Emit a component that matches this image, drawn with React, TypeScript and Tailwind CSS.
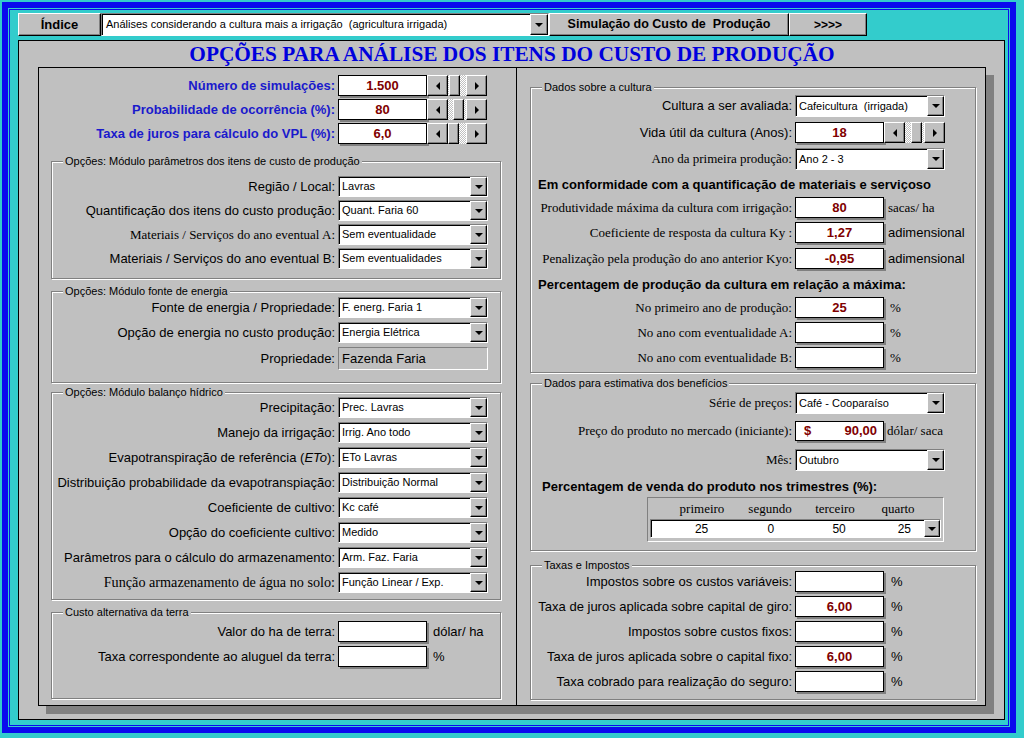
import React from "react";

const sans = "font-['Liberation_Sans',Arial,sans-serif]";
const serif = "font-['Liberation_Serif','Times_New_Roman',serif]";
const raised =
  "border border-t-white border-l-white border-r-black border-b-black shadow-[inset_-1px_-1px_0_#808080] bg-[#c0c0c0]";
const sunken =
  "border border-t-[#808080] border-l-[#808080] border-r-white border-b-white shadow-[inset_1px_1px_0_#000]";
const shadowed = "border border-black shadow-[2px_2px_0_#808080] bg-white";

function DownTri() {
  return <div className="w-0 h-0 border-x-[4px] border-x-transparent border-t-[4px] border-t-black" />;
}

function DropBtn({ w = "w-[17px]" }: { w?: string }) {
  return (
    <div className={`${w} h-full shrink-0 flex items-center justify-center ${raised}`}>
      <DownTri />
    </div>
  );
}

function Combo({ value, w = "w-[150px]", h = "h-[21px]" }: { value: string; w?: string; h?: string }) {
  return (
    <div className={`${w} ${h} shrink-0 flex bg-white ${sunken}`}>
      <div className={`flex-1 min-w-0 flex items-center pl-[3px] text-[11px] ${sans} text-black whitespace-pre overflow-hidden`}>
        {value}
      </div>
      <DropBtn />
    </div>
  );
}

function Arrow({ dir }: { dir: "l" | "r" }) {
  return (
    <div className={`w-[21px] h-full shrink-0 flex items-center justify-center ${raised}`}>
      {dir === "l" ? (
        <div className="w-0 h-0 border-y-[4px] border-y-transparent border-r-[4px] border-r-black" />
      ) : (
        <div className="w-0 h-0 border-y-[4px] border-y-transparent border-l-[4px] border-l-black" />
      )}
    </div>
  );
}

function Spinner({ thumb, track = "w-[18px]" }: { thumb: string; track?: string }) {
  return (
    <div className="flex h-full shrink-0">
      <Arrow dir="l" />
      <div
        className={`${track} h-full flex [background-image:repeating-conic-gradient(#ffffff_0%_25%,#c0c0c0_0%_50%)] [background-size:2px_2px]`}
      >
        <div className={`${thumb} w-[11px] h-full ${raised}`} />
      </div>
      <Arrow dir="r" />
    </div>
  );
}

function Val({ v, w = "w-[89px]", h = "h-[21px]" }: { v?: string; w?: string; h?: string }) {
  return (
    <div className={`${w} ${h} shrink-0 ${shadowed} flex items-center justify-center text-[13px] font-bold text-[#800000] ${sans}`}>
      {v}
    </div>
  );
}

function Label({
  w,
  children,
  f = "sans",
  size = "text-[13px]",
}: {
  w: string;
  children: React.ReactNode;
  f?: "sans" | "serif";
  size?: string;
}) {
  return (
    <div className={`${w} shrink-0 text-right pr-[3px] ${size} whitespace-nowrap text-black ${f === "serif" ? serif : sans}`}>
      {children}
    </div>
  );
}

function Group({ title, className, children }: { title: string; className: string; children: React.ReactNode }) {
  return (
    <div className={`border border-[#808080] shadow-[1px_1px_0_#fff,inset_1px_1px_0_#fff] flex flex-col ${className}`}>
      <div className={`-mt-[7px] ml-[11px] w-fit px-[2px] bg-[#c0c0c0] h-[13px] leading-[13px] text-[11px] text-black ${sans}`}>
        {title}
      </div>
      {children}
    </div>
  );
}

const LW = "w-[286px]";
const RW = "w-[264px]";

function LRow({
  label,
  value,
  f,
  size,
}: {
  label: React.ReactNode;
  value: string;
  f?: "sans" | "serif";
  size?: string;
}) {
  return (
    <div className="flex items-center h-[21px]">
      <Label w={LW} f={f} size={size}>
        {label}
      </Label>
      <Combo value={value} />
    </div>
  );
}

function RRow({
  label,
  f,
  children,
  h = "h-[21px]",
  className = "",
}: {
  label: React.ReactNode;
  f?: "sans" | "serif";
  children: React.ReactNode;
  h?: string;
  className?: string;
}) {
  return (
    <div className={`flex items-center ${h} ${className}`}>
      <Label w={RW} f={f}>
        {label}
      </Label>
      {children}
    </div>
  );
}

function Unit({ children, f = "sans", ml = "ml-[5px]" }: { children: React.ReactNode; f?: "sans" | "serif"; ml?: string }) {
  return <div className={`${ml} text-[13px] text-black whitespace-nowrap ${f === "serif" ? serif : sans}`}>{children}</div>;
}

function SpinRow({ label, v, thumb }: { label: string; v: string; thumb: string }) {
  return (
    <div className="flex items-center h-[21px]">
      <div className={`w-[299px] shrink-0 text-right pr-[3px] text-[13px] font-bold text-[#1a1acc] whitespace-nowrap ${sans}`}>
        {label}
      </div>
      <Val v={v} />
      <Spinner thumb={thumb} />
    </div>
  );
}

export default function App() {
  return (
    <div className="w-[1024px] h-[738px] bg-[#33cccc] pt-[2px] pl-[2px] pr-[8px] pb-[5px] overflow-hidden">
      <div className="w-full h-full border-[6px] border-[#0a0aee]">
        <div className="w-full h-full p-[1px]">
          <div className="w-full h-full border border-[#0a0aee] bg-[#33cccc] pt-[3px] pl-[8px] flex flex-col">
            {/* top bar */}
            <div className="flex h-[23px]">
              <div className={`w-[83px] h-full flex items-center justify-center text-[13px] font-bold text-black ${sans} ${raised}`}>
                Índice
              </div>
              <div className={`w-[448px] h-full flex bg-white ${sunken}`}>
                <div className={`flex-1 flex items-center pl-[4px] text-[11px] text-black whitespace-pre ${sans}`}>
                  Análises considerando a cultura mais a irrigação  (agricultura irrigada)
                </div>
                <DropBtn w="w-[18px]" />
              </div>
              <div
                className={`w-[240px] h-full flex items-center justify-center text-[12.5px] font-bold text-black whitespace-pre ${sans} ${raised}`}
              >
                Simulação do Custo de  Produção
              </div>
              <div className={`w-[78px] h-full flex items-center justify-center text-[12px] font-bold text-black ${sans} ${raised}`}>
                &gt;&gt;&gt;&gt;
              </div>
            </div>

            {/* form */}
            <div className="mt-[4px] w-[987px] h-[680px] border border-black bg-[#c0c0c0] pl-[19px] flex flex-col">
              <div className="w-[948px] h-[26px] flex items-center justify-center">
                <div className={`text-[21.3px] leading-[26px] font-bold text-[#0000dd] whitespace-nowrap ${serif}`}>
                  OPÇÕES PARA ANÁLISE DOS ITENS DO CUSTO DE PRODUÇÃO
                </div>
              </div>

              <div className="w-[948px] h-[639px] border border-black bg-[#c0c0c0] shadow-[8px_8px_0_#808080] flex">
                {/* left column */}
                <div className="w-[478px] h-full border-r border-black flex flex-col pt-[7px]">
                  <div className="flex flex-col gap-[3px]">
                    <SpinRow label="Número de simulações:" v="1.500" thumb="ml-[1px]" />
                    <SpinRow label="Probabilidade de ocorrência (%):" v="80" thumb="ml-[5px]" />
                    <SpinRow label="Taxa de juros para cálculo do VPL (%):" v="6,0" thumb="ml-0" />
                  </div>

                  <div className="pl-[12px] flex flex-col">
                    <Group title="Opções: Módulo parâmetros dos itens de custo de produção" className="mt-[17px] w-[450px] h-[118px]">
                      <div className="mt-[8px] flex flex-col gap-[3px]">
                        <LRow label="Região / Local:" value="Lavras" />
                        <LRow label="Quantificação dos itens do custo produção:" value="Quant. Faria 60" />
                        <LRow label="Materiais / Serviços do ano eventual A:" value="Sem eventualidade" f="serif" />
                        <LRow label="Materiais / Serviços do ano eventual B:" value="Sem eventualidades" />
                      </div>
                    </Group>

                    <Group title="Opções: Módulo fonte de energia" className="mt-[12px] w-[450px] h-[92px]">
                      <div className="-mt-[1px] flex flex-col gap-[4px]">
                        <LRow label="Fonte de energia / Propriedade:" value="F. energ. Faria 1" />
                        <LRow label="Opção de energia no custo produção:" value="Energia Elétrica" />
                        <div className="flex items-center h-[23px]">
                          <Label w={LW}>Propriedade:</Label>
                          <div
                            className={`w-[150px] h-full border border-t-[#808080] border-l-[#808080] border-r-white border-b-white flex items-center pl-[3px] text-[13px] text-black ${sans}`}
                          >
                            Fazenda Faria
                          </div>
                        </div>
                      </div>
                    </Group>

                    <Group title="Opções: Módulo balanço hídrico" className="mt-[9px] w-[450px] h-[208px]">
                      <div className="-mt-[2px] flex flex-col gap-[4px]">
                        <LRow label="Precipitação:" value="Prec. Lavras" />
                        <LRow label="Manejo da irrigação:" value="Irrig. Ano todo" />
                        <LRow
                          label={
                            <>
                              Evapotranspiração de referência (<i>ETo</i>):
                            </>
                          }
                          value="ETo Lavras"
                        />
                        <LRow label="Distribuição probabilidade da evapotranspiação:" value="Distribuição Normal" />
                        <LRow label="Coeficiente de cultivo:" value="Kc café" />
                        <LRow label="Opção do coeficiente cultivo:" value="Medido" />
                        <LRow label="Parâmetros para o cálculo do armazenamento:" value="Arm. Faz. Faria" />
                        <LRow
                          label="Função armazenamento de água no solo:"
                          value="Função Linear / Exp."
                          f="serif"
                          size="text-[14.2px]"
                        />
                      </div>
                    </Group>

                    <Group title="Custo alternativa da terra" className="mt-[12px] w-[450px] h-[87px]">
                      <div className="mt-[2px] flex flex-col gap-[4px]">
                        <div className="flex items-center h-[21px]">
                          <Label w={LW}>Valor do ha de terra:</Label>
                          <Val />
                          <Unit ml="ml-[6px]">dólar/ ha</Unit>
                        </div>
                        <div className="flex items-center h-[21px]">
                          <Label w={LW}>Taxa correspondente ao aluguel da terra:</Label>
                          <Val />
                          <Unit ml="ml-[6px]">%</Unit>
                        </div>
                      </div>
                    </Group>
                  </div>
                </div>

                {/* right column */}
                <div className="flex-1 h-full pl-[13px] pt-[19px] flex flex-col">
                  <Group title="Dados sobre a cultura" className="w-[446px] h-[286px]">
                    <RRow label="Cultura a ser avaliada:" h="h-[22px]" className="mt-[1px]">
                      <Combo value="Cafeicultura  (irrigada)" h="h-[22px]" />
                    </RRow>
                    <RRow label="Vida útil da cultura (Anos):" className="mt-[5px]">
                      <Val v="18" />
                      <Spinner thumb="ml-[6px]" track="w-[19px]" />
                    </RRow>
                    <RRow label="Ano da primeira produção:" f="serif" h="h-[22px]" className="mt-[5px]">
                      <Combo value="Ano 2 - 3" h="h-[22px]" />
                    </RRow>
                    <div className={`mt-[7px] h-[16px] leading-[16px] pl-[7px] text-[13px] font-bold text-black whitespace-nowrap ${sans}`}>
                      Em conformidade com a quantificação de materiais e serviçoso
                    </div>
                    <RRow label="Produtividade máxima da cultura com irrigação:" f="serif" className="mt-[4px]">
                      <Val v="80" />
                      <Unit f="serif" ml="ml-[4px]">
                        sacas/ ha
                      </Unit>
                    </RRow>
                    <RRow label="Coeficiente de resposta da cultura  Ky :" f="serif" className="mt-[4px]">
                      <Val v="1,27" />
                      <Unit ml="ml-[4px]">adimensional</Unit>
                    </RRow>
                    <RRow label="Penalização pela produção do ano anterior Kyo:" f="serif" className="mt-[5px]">
                      <Val v="-0,95" />
                      <Unit ml="ml-[4px]">adimensional</Unit>
                    </RRow>
                    <div className={`mt-[8px] h-[16px] leading-[16px] pl-[7px] text-[13px] font-bold text-black whitespace-nowrap ${sans}`}>
                      Percentagem de produção da cultura em relação a máxima:
                    </div>
                    <RRow label="No primeiro ano de produção:" f="serif" className="mt-[4px]">
                      <Val v="25" />
                      <Unit f="serif" ml="ml-[6px]">
                        %
                      </Unit>
                    </RRow>
                    <RRow label="No ano com eventualidade A:" f="serif" className="mt-[4px]">
                      <Val />
                      <Unit f="serif" ml="ml-[6px]">
                        %
                      </Unit>
                    </RRow>
                    <RRow label="No ano com eventualidade B:" f="serif" className="mt-[4px]">
                      <Val />
                      <Unit f="serif" ml="ml-[6px]">
                        %
                      </Unit>
                    </RRow>
                  </Group>

                  <Group title="Dados para estimativa dos benefícios" className="mt-[10px] w-[446px] h-[168px]">
                    <RRow label="Série de preços:" f="serif" h="h-[22px]" className="mt-[2px]">
                      <Combo value="Café - Cooparaíso" h="h-[22px]" />
                    </RRow>
                    <RRow label="Preço do produto no mercado (iniciante):" f="serif" h="h-[20px]" className="mt-[7px]">
                      <div
                        className={`w-[89px] h-[20px] shrink-0 ${shadowed} flex items-center justify-between pl-[8px] pr-[6px] text-[13px] font-bold text-[#800000] ${sans}`}
                      >
                        <span>$</span>
                        <span>90,00</span>
                      </div>
                      <Unit f="serif" ml="ml-[3px]">
                        dólar/ saca
                      </Unit>
                    </RRow>
                    <RRow label="Mês:" f="serif" h="h-[22px]" className="mt-[8px]">
                      <Combo value="Outubro" h="h-[22px]" />
                    </RRow>
                    <div className={`mt-[8px] h-[16px] leading-[16px] pl-[11px] text-[13px] font-bold text-black whitespace-nowrap ${sans}`}>
                      Percentagem de venda do produto nos trimestres (%):
                    </div>
                    <div className="mt-[2px] ml-[116px] w-[297px] h-[45px] border border-t-[#808080] border-l-[#808080] border-r-white border-b-white flex flex-col">
                      <div className={`flex h-[21px] items-center pl-[20px] text-[13px] text-black ${serif}`}>
                        <div className="w-[68px] text-center">primeiro</div>
                        <div className="w-[68px] text-center">segundo</div>
                        <div className="w-[62px] text-center">terceiro</div>
                        <div className="w-[64px] text-center">quarto</div>
                      </div>
                      <div className={`ml-[2px] w-[291px] h-[19px] flex items-center bg-white ${sunken} text-[12px] text-black ${sans}`}>
                        <div className="ml-[31px] w-[40px] text-center">25</div>
                        <div className="ml-[30px] w-[40px] text-center">0</div>
                        <div className="ml-[29px] w-[40px] text-center">50</div>
                        <div className="ml-[26px] w-[40px] text-center">25</div>
                        <div className="ml-auto h-full">
                          <DropBtn w="w-[16px]" />
                        </div>
                      </div>
                    </div>
                  </Group>

                  <Group title="Taxas e Impostos" className="mt-[14px] w-[446px] h-[135px]">
                    <div className="-mt-[1px] flex flex-col gap-[4px]">
                      <RRow label="Impostos sobre os custos variáveis:">
                        <Val />
                        <Unit ml="ml-[7px]">%</Unit>
                      </RRow>
                      <RRow label="Taxa de juros aplicada sobre capital de giro:">
                        <Val v="6,00" />
                        <Unit ml="ml-[7px]">%</Unit>
                      </RRow>
                      <RRow label="Impostos sobre custos fixos:">
                        <Val />
                        <Unit ml="ml-[7px]">%</Unit>
                      </RRow>
                      <RRow label="Taxa de juros aplicada sobre o capital fixo:">
                        <Val v="6,00" />
                        <Unit ml="ml-[7px]">%</Unit>
                      </RRow>
                      <RRow label="Taxa cobrado para realização do seguro:">
                        <Val />
                        <Unit ml="ml-[7px]">%</Unit>
                      </RRow>
                    </div>
                  </Group>
                </div>
              </div>
            </div>
          </div>
        </div>
      </div>
    </div>
  );
}
